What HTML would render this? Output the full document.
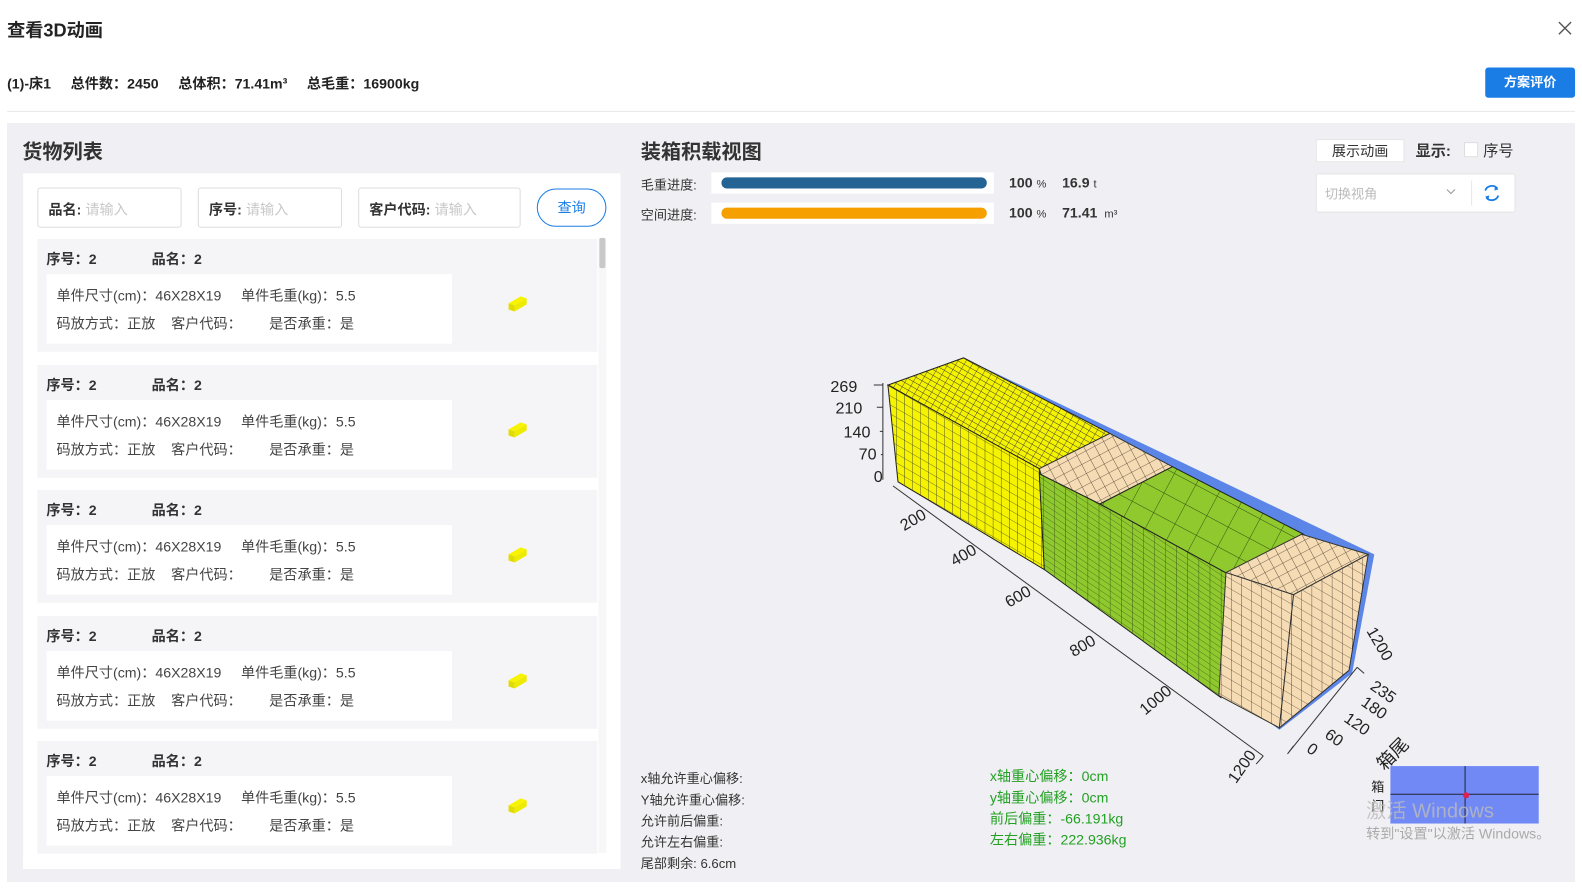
<!DOCTYPE html>
<html><head><meta charset="utf-8"><style>
*{margin:0;padding:0;box-sizing:border-box}
body{width:1582px;height:884px;background:#fff;font-family:"Liberation Sans","Noto Sans CJK SC",sans-serif;color:#333;position:relative;overflow:hidden;font-size:14px}
#w{position:absolute;left:0;top:0;width:1582px;height:884px;transform:scale(1.009,1.008);transform-origin:0 0}
.a{position:absolute;white-space:nowrap}
.b{font-weight:bold}
.card{position:absolute;left:37px;width:555px;height:112px;background:#f5f5f7}
.card .h{position:absolute;top:10px;left:9px;font-weight:bold;font-size:14px;color:#333}
.card .in{position:absolute;left:9px;top:35px;width:402px;height:69px;background:#fff;font-size:14px;color:#444}
.card .in div{position:absolute;left:10px}
.ic{position:absolute;left:464px;top:54px}
.inp{position:absolute;top:186px;height:40px;border:1px solid #ddd;border-radius:3px;background:#fff;font-size:14px;padding:11px 10px}
.inp b{color:#333}.inp span{color:#c8c8c8;margin-left:4px}
</style></head><body><div id="w">
<div class="a b" style="left:7px;top:16px;font-size:18px;color:#222">查看3D动画</div>
<svg class="a" style="left:1544px;top:21px" width="14" height="14"><path d="M1 1L13 13M13 1L1 13" stroke="#555" stroke-width="1.4"/></svg>
<div class="a b" style="left:7px;top:73px;font-size:14px;color:#222">(1)-床1&nbsp;&nbsp;&nbsp;&nbsp; 总件数：2450&nbsp;&nbsp;&nbsp;&nbsp; 总体积：71.41m³&nbsp;&nbsp;&nbsp;&nbsp; 总毛重：16900kg</div>
<div class="a" style="left:1472px;top:67px;width:89px;height:30px;background:#1a7de6;border-radius:3px;color:#fff;font-size:13px;text-align:center;line-height:30px;font-weight:bold">方案评价</div>
<div class="a" style="left:7px;top:110px;width:1554px;height:1px;background:#e8e8e8"></div>
<div class="a" style="left:7px;top:122px;width:1554px;height:753px;background:#f0f0f4"></div>
<div class="a b" style="left:22px;top:134px;font-size:20px;color:#333">货物列表</div>
<div class="a" style="left:23px;top:172px;width:592px;height:690px;background:#fff"></div>
<div class="inp" style="left:37px;width:143px"><b>品名:</b><span>请输入</span></div>
<div class="inp" style="left:196px;width:143px"><b>序号:</b><span>请输入</span></div>
<div class="inp" style="left:355px;width:161px"><b>客户代码:</b><span>请输入</span></div>
<div class="a" style="left:532px;top:187px;width:69px;height:38px;border:1px solid #1a7de6;border-radius:19px;color:#1a7de6;text-align:center;line-height:36px;font-size:14px">查询</div>
<div class="a" style="left:593px;top:236px;width:8px;height:610px;background:#f7f7f7"></div>
<div class="a" style="left:594px;top:236px;width:6px;height:30px;background:#c8c8c8;border-radius:2px"></div>

<div class="card" style="top:237px"><div class="h">序号：2&nbsp;&nbsp;&nbsp;&nbsp;&nbsp;&nbsp;&nbsp;&nbsp;&nbsp;&nbsp;&nbsp;&nbsp;&nbsp; 品名：2</div><div class="in"><div style="top:11px">单件尺寸(cm)：46X28X19&nbsp;&nbsp;&nbsp;&nbsp; 单件毛重(kg)：5.5</div><div style="top:39px">码放方式：正放&nbsp;&nbsp;&nbsp; 客户代码：&nbsp;&nbsp;&nbsp;&nbsp;&nbsp;&nbsp; 是否承重：是</div></div><svg class="ic" width="24" height="20"><polygon points="3,10 15,3 21,5 9,12" fill="#f8f400"/><polygon points="3,10 9,12 9,18 3,16" fill="#e0dc00"/><polygon points="9,12 21,5 21,11 9,18" fill="#eeea00"/></svg></div>
<div class="card" style="top:362px"><div class="h">序号：2&nbsp;&nbsp;&nbsp;&nbsp;&nbsp;&nbsp;&nbsp;&nbsp;&nbsp;&nbsp;&nbsp;&nbsp;&nbsp; 品名：2</div><div class="in"><div style="top:11px">单件尺寸(cm)：46X28X19&nbsp;&nbsp;&nbsp;&nbsp; 单件毛重(kg)：5.5</div><div style="top:39px">码放方式：正放&nbsp;&nbsp;&nbsp; 客户代码：&nbsp;&nbsp;&nbsp;&nbsp;&nbsp;&nbsp; 是否承重：是</div></div><svg class="ic" width="24" height="20"><polygon points="3,10 15,3 21,5 9,12" fill="#f8f400"/><polygon points="3,10 9,12 9,18 3,16" fill="#e0dc00"/><polygon points="9,12 21,5 21,11 9,18" fill="#eeea00"/></svg></div>
<div class="card" style="top:486px"><div class="h">序号：2&nbsp;&nbsp;&nbsp;&nbsp;&nbsp;&nbsp;&nbsp;&nbsp;&nbsp;&nbsp;&nbsp;&nbsp;&nbsp; 品名：2</div><div class="in"><div style="top:11px">单件尺寸(cm)：46X28X19&nbsp;&nbsp;&nbsp;&nbsp; 单件毛重(kg)：5.5</div><div style="top:39px">码放方式：正放&nbsp;&nbsp;&nbsp; 客户代码：&nbsp;&nbsp;&nbsp;&nbsp;&nbsp;&nbsp; 是否承重：是</div></div><svg class="ic" width="24" height="20"><polygon points="3,10 15,3 21,5 9,12" fill="#f8f400"/><polygon points="3,10 9,12 9,18 3,16" fill="#e0dc00"/><polygon points="9,12 21,5 21,11 9,18" fill="#eeea00"/></svg></div>
<div class="card" style="top:611px"><div class="h">序号：2&nbsp;&nbsp;&nbsp;&nbsp;&nbsp;&nbsp;&nbsp;&nbsp;&nbsp;&nbsp;&nbsp;&nbsp;&nbsp; 品名：2</div><div class="in"><div style="top:11px">单件尺寸(cm)：46X28X19&nbsp;&nbsp;&nbsp;&nbsp; 单件毛重(kg)：5.5</div><div style="top:39px">码放方式：正放&nbsp;&nbsp;&nbsp; 客户代码：&nbsp;&nbsp;&nbsp;&nbsp;&nbsp;&nbsp; 是否承重：是</div></div><svg class="ic" width="24" height="20"><polygon points="3,10 15,3 21,5 9,12" fill="#f8f400"/><polygon points="3,10 9,12 9,18 3,16" fill="#e0dc00"/><polygon points="9,12 21,5 21,11 9,18" fill="#eeea00"/></svg></div>
<div class="card" style="top:735px;height:112px"><div class="h">序号：2&nbsp;&nbsp;&nbsp;&nbsp;&nbsp;&nbsp;&nbsp;&nbsp;&nbsp;&nbsp;&nbsp;&nbsp;&nbsp; 品名：2</div><div class="in"><div style="top:11px">单件尺寸(cm)：46X28X19&nbsp;&nbsp;&nbsp;&nbsp; 单件毛重(kg)：5.5</div><div style="top:39px">码放方式：正放&nbsp;&nbsp;&nbsp; 客户代码：&nbsp;&nbsp;&nbsp;&nbsp;&nbsp;&nbsp; 是否承重：是</div></div><svg class="ic" width="24" height="20"><polygon points="3,10 15,3 21,5 9,12" fill="#f8f400"/><polygon points="3,10 9,12 9,18 3,16" fill="#e0dc00"/><polygon points="9,12 21,5 21,11 9,18" fill="#eeea00"/></svg></div>
<div class="a" style="left:23px;top:847px;width:592px;height:15px;background:#fff"></div>

<div class="a b" style="left:635px;top:134px;font-size:20px;color:#333">装箱积载视图</div>
<div class="a" style="left:635px;top:173px;font-size:13px">毛重进度:</div>
<div class="a" style="left:635px;top:203px;font-size:13px">空间进度:</div>
<div class="a" style="left:705px;top:171px;width:280px;height:21px;background:#fff"></div>
<div class="a" style="left:715px;top:176px;width:263px;height:11px;background:#246494;border-radius:6px"></div>
<div class="a" style="left:705px;top:201px;width:280px;height:21px;background:#fff"></div>
<div class="a" style="left:715px;top:206px;width:263px;height:11px;background:#f59f00;border-radius:6px"></div>
<div class="a b" style="left:1000px;top:173px;font-size:14px">100 <span style="font-weight:normal;font-size:11px">%</span>&nbsp;&nbsp;&nbsp; 16.9 <span style="font-weight:normal;font-size:11px">t</span></div>
<div class="a b" style="left:1000px;top:203px;font-size:14px">100 <span style="font-weight:normal;font-size:11px">%</span>&nbsp;&nbsp;&nbsp; 71.41 <span style="font-weight:normal;font-size:11px">&nbsp;m³</span></div>
<div class="a" style="left:1304px;top:138px;width:88px;height:23px;background:#fff;border:1px solid #e4e4e4;text-align:center;line-height:22px;font-size:14px;color:#333">展示动画</div>
<div class="a b" style="left:1403px;top:139px;font-size:15px">显示:</div>
<div class="a" style="left:1451px;top:141px;width:14px;height:15px;background:#fff;border:1px solid #ddd"></div>
<div class="a" style="left:1470px;top:139px;font-size:15px">序号</div>
<div class="a" style="left:1304px;top:172px;width:198px;height:39px;background:#fff;border:1px solid #e4e4e4;border-radius:3px"></div>
<div class="a" style="left:1313px;top:182px;font-size:13px;color:#bbb">切换视角</div>
<svg class="a" style="left:1433px;top:187px" width="10" height="7"><path d="M1 1L5 5L9 1" stroke="#999" fill="none"/></svg>
<div class="a" style="left:1458px;top:179px;width:1px;height:25px;background:#e6e6e6"></div>
<svg class="a" style="left:1468px;top:181px" width="21" height="21"><path d="M4 8A7 7 0 0 1 16 6M17 13A7 7 0 0 1 5 15" stroke="#1a7de6" stroke-width="1.8" fill="none"/><path d="M14 3L17 7L13 8Z M7 18L4 14L8 13Z" fill="#1a7de6"/></svg>

<svg class="a" style="left:0;top:0" width="1582" height="884" font-family="Liberation Sans, sans-serif">
<defs>
<pattern id="py" width="8" height="9" patternUnits="userSpaceOnUse" patternTransform="skewY(30)"><rect width="8" height="9" fill="#f5f300"/><path d="M0 0H8M0 0V9" stroke="#333" stroke-width="0.8"/></pattern>
<pattern id="pyt" width="7" height="5" patternUnits="userSpaceOnUse" patternTransform="rotate(30)"><rect width="7" height="5" fill="#f5f300"/><path d="M0 0H7M0 0V5" stroke="#333" stroke-width="0.8"/></pattern>
<pattern id="pg" width="11" height="6" patternUnits="userSpaceOnUse" patternTransform="skewY(34)"><rect width="11" height="6" fill="#8fc92e"/><path d="M0 0H11M0 0V6" stroke="#2f4a10" stroke-width="0.8"/></pattern>
<pattern id="pgt" width="24" height="22" patternUnits="userSpaceOnUse" patternTransform="rotate(28)"><rect width="24" height="22" fill="#8fc92e"/><path d="M0 0H24M0 0V22" stroke="#2f4a10" stroke-width="0.9"/></pattern>
<pattern id="pb" width="10" height="10" patternUnits="userSpaceOnUse" patternTransform="skewY(30)"><rect width="10" height="10" fill="#f5dcb4"/><path d="M0 0H10M0 0V10" stroke="#4a3a2a" stroke-width="0.8"/></pattern>
<pattern id="pbt" width="10" height="10" patternUnits="userSpaceOnUse" patternTransform="rotate(-28)"><rect width="10" height="10" fill="#f5dcb4"/><path d="M0 0H10M0 0V10" stroke="#4a3a2a" stroke-width="0.8"/></pattern>
</defs>
<polygon points="955,355 1362,550 1340,668 1268,724 1100,600" fill="#5b86e8"/>
<polygon points="880,382 955,355 1100,430 1030,465" fill="url(#pyt)" stroke="#222"/>
<polygon points="880,382 1030,465 1035,565 890,478" fill="url(#py)" stroke="#222"/>
<polygon points="1030,465 1100,430 1162,463 1090,500 1035,480" fill="url(#pbt)" stroke="#333"/>
<polygon points="1090,500 1162,463 1292,530 1218,570" fill="url(#pgt)" stroke="#222"/>
<polygon points="1030,470 1090,500 1218,570 1210,692 1035,565" fill="url(#pg)" stroke="#222"/>
<polygon points="1215,568 1290,530 1356,550 1282,590" fill="url(#pbt)" stroke="#333"/>
<polygon points="1215,568 1282,590 1268,722 1208,690" fill="url(#pb)" stroke="#333"/>
<polygon points="1282,590 1356,550 1337,665 1268,722" fill="url(#pb)" stroke="#333"/>
<g stroke="#333" fill="none" stroke-width="1">
<path d="M875 380V476M866 382H875M869 404H875M872 428H875M873 451H875"/>
<path d="M885 482L1252 750M1252 750L1245 758"/>
<path d="M1276 748L1345 662M1282 740L1276 748M1345 662L1352 668"/>
</g>
<g font-size="16" fill="#222">
<text x="823" y="389">269</text><text x="828" y="410">210</text><text x="836" y="434">140</text><text x="851" y="456">70</text><text x="866" y="478">0</text>
<text transform="translate(896,527) rotate(-30)">200</text>
<text transform="translate(946,562) rotate(-30)">400</text>
<text transform="translate(1000,603) rotate(-30)">600</text>
<text transform="translate(1064,652) rotate(-30)">800</text>
<text transform="translate(1135,710) rotate(-40)">1000</text>
<text transform="translate(1225,778) rotate(-55)">1200</text>
<text transform="translate(1354,626) rotate(60)">1200</text>
<text transform="translate(1357,683) rotate(35)">235</text>
<text transform="translate(1348,699) rotate(35)">180</text>
<text transform="translate(1331,715) rotate(35)">120</text>
<text transform="translate(1312,731) rotate(35)">60</text>
<text transform="translate(1294,745) rotate(35)">0</text>
<text transform="translate(1372,765) rotate(-45)" font-size="18">箱尾</text>
</g>
<rect x="1378" y="760" width="147" height="57" fill="#7089f5"/>
<path d="M1452 760V817M1378 788H1525" stroke="#223" stroke-width="1"/>
<circle cx="1453" cy="789" r="3" fill="#e02050"/>
<text x="1359" y="785" font-size="13" fill="#222" font-family="Noto Sans CJK SC">箱</text>
<text x="1359" y="804" font-size="13" fill="#222" font-family="Noto Sans CJK SC">门</text>
<text x="1354" y="811" font-size="20" fill="#bbb" fill-opacity="0.8" font-family="Liberation Sans, Noto Sans CJK SC">激活 Windows</text>
<text x="1354" y="832" font-size="14" fill="#aaa" font-family="Liberation Sans, Noto Sans CJK SC">转到"设置"以激活 Windows。</text>
</svg>

<div class="a" style="left:635px;top:762px;font-size:13px;line-height:21px;color:#333">x轴允许重心偏移:<br>Y轴允许重心偏移:<br>允许前后偏重:<br>允许左右偏重:<br>尾部剩余: 6.6cm</div>
<div class="a" style="left:981px;top:760px;font-size:14px;line-height:21px;color:#22a022">x轴重心偏移：0cm<br>y轴重心偏移：0cm<br>前后偏重：-66.191kg<br>左右偏重：222.936kg</div>
</div></body></html>
